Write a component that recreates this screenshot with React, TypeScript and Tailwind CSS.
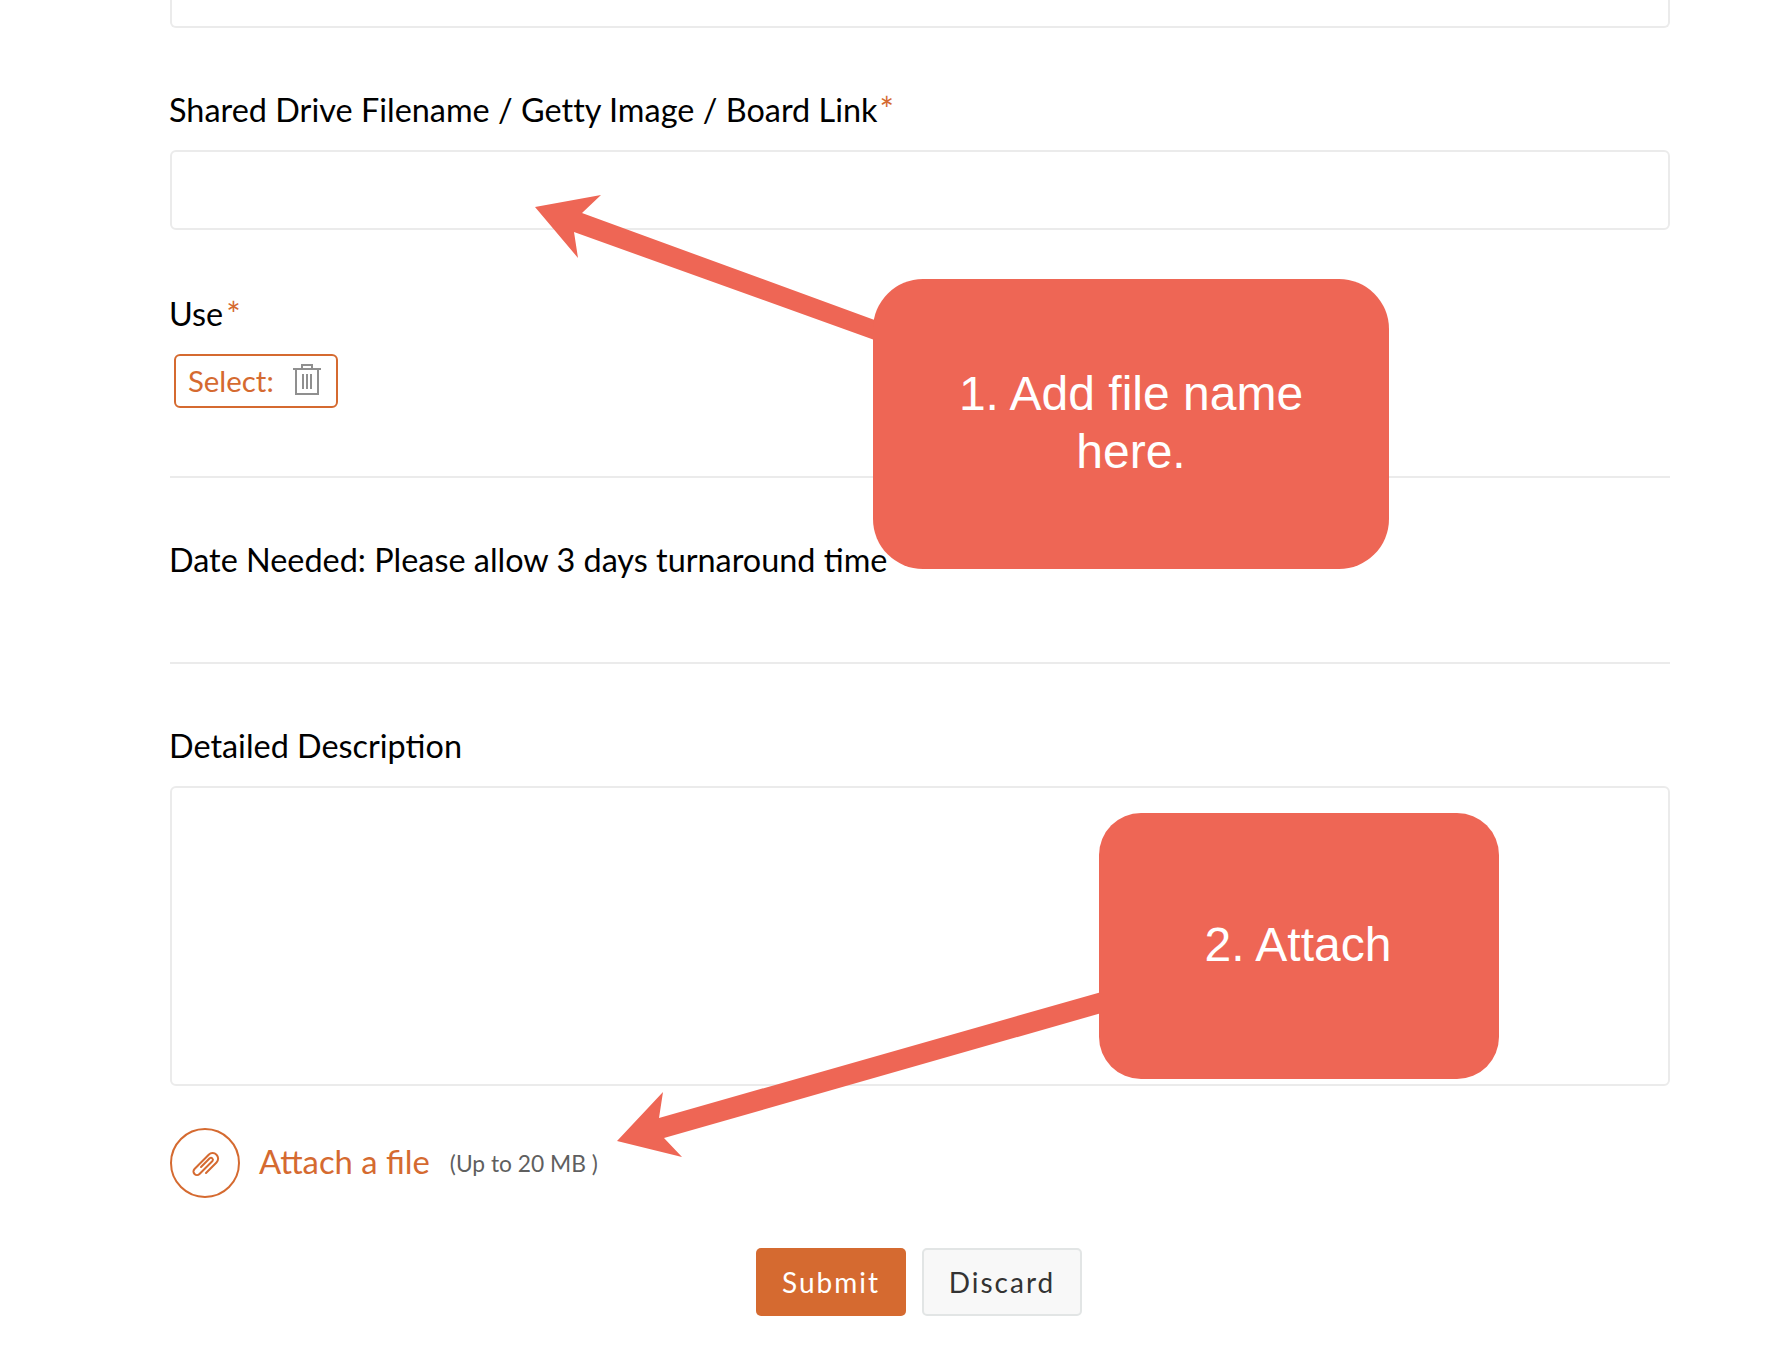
export default function App() {
  return (
    <div className="relative h-[1368px] bg-white font-['Lato','Liberation_Sans',sans-serif] text-black overflow-hidden">
      <div className="ml-[170px] w-[1500px] flex flex-col items-stretch">
        <div className="h-[28px] border-2 border-t-0 border-[#ebebeb] rounded-b-[6px]" />
        <div className="mt-[60px] -ml-[1px] h-[44px] leading-[44px] text-[32.4px] tracking-[0.02px] whitespace-nowrap">
          Shared Drive Filename / Getty Image / Board Link<span className="ml-[2px] text-[#d56a30] text-[34px] leading-none">*</span>
        </div>
        <div className="mt-[18px] h-[80px] border-2 border-[#ebebeb] rounded-[6px]" />
        <div className="mt-[62px] -ml-[1px] h-[44px] leading-[44px] text-[32.4px]">
          Use<span className="ml-[3px] text-[#d56a30] text-[34px] leading-none relative top-[1px]">*</span>
        </div>
        <div className="mt-[18px] ml-[4px] w-[164px] h-[54px] border-2 border-[#d56a30] rounded-[6px] flex items-center pl-[12px]">
          <span className="text-[#d56a30] text-[29.4px]">Select:</span>
          <svg className="ml-[18px] -mt-[4px]" width="30" height="32" viewBox="0 0 30 32" fill="none" stroke="#8f8f8f" strokeWidth="2">
            <path d="M1 6h28M10 6V2h10v4M4 6v25h22V6M11 11v15M15 11v15M19 11v15" />
          </svg>
        </div>
        <div className="mt-[68px] h-[2px] bg-[#ebebeb]" />
        <div className="mt-[60px] -ml-[1px] h-[44px] leading-[44px] text-[32.4px] whitespace-nowrap">Date Needed: Please allow 3 days turnaround time</div>
        <div className="mt-[80px] h-[2px] bg-[#ebebeb]" />
        <div className="mt-[60px] -ml-[1px] h-[44px] leading-[44px] text-[32.4px]">Detailed Description</div>
        <div className="mt-[18px] h-[300px] border-2 border-[#ebebeb] rounded-[6px]" />
        <div className="mt-[42px] flex items-center">
          <div className="w-[70px] h-[70px] rounded-full border-2 border-[#d56a30] flex items-center justify-center">
            <svg width="30" height="30" viewBox="0 0 30 30" fill="none" stroke="#d56a30" strokeWidth="2" strokeLinecap="round" strokeLinejoin="round">
              <path d="M16 25 26.5 14.5A5.5 5.5 0 0 0 18.7 6.7L4.5 21A3.5 3.5 0 0 0 9.5 26L22.5 13A2 2 0 0 0 19.7 10.2L11 19" />
            </svg>
          </div>
          <span className="ml-[19px] text-[#d56a30] text-[32.8px] leading-none -mt-[1px]">Attach a file</span>
          <span className="ml-[20px] text-[#5f5f5f] text-[22.8px] leading-none">(Up to 20 MB )</span>
        </div>
        <div className="mt-[50px] flex justify-center gap-[16px] pr-[2px] tracking-[2px]">
          <button className="w-[150px] h-[68px] rounded-[5px] bg-[#d56a30] text-white text-[28px]">Submit</button>
          <button className="w-[160px] h-[68px] rounded-[5px] bg-[#f8f8f8] border-2 border-[#e2e5e5] text-[#333333] text-[28px]">Discard</button>
        </div>
      </div>
      <svg className="absolute left-0 top-0 pointer-events-none" width="1780" height="1368" viewBox="0 0 1780 1368" fill="#ee6655">
        <polygon points="535,207 601,195 582,213 880,322 880,342 574,232 578,258" />
        <polygon points="617,1141 663,1092 659,1118 1105,991 1105,1012 664,1138 682,1157" />
      </svg>
      <div className="absolute left-[873px] top-[279px] w-[516px] h-[290px] rounded-[50px] bg-[#ee6655] text-white font-['Liberation_Sans',sans-serif] text-[48px] leading-[58px] text-center flex items-center justify-center px-[60px] pb-[2px]">
        1. Add file name here.
      </div>
      <div className="absolute left-[1099px] top-[813px] w-[400px] h-[266px] rounded-[42px] bg-[#ee6655] text-white font-['Liberation_Sans',sans-serif] text-[48px] leading-[58px] text-center flex items-center justify-center pb-[2px] pr-[2px]">
        2. Attach
      </div>
    </div>
  );
}
